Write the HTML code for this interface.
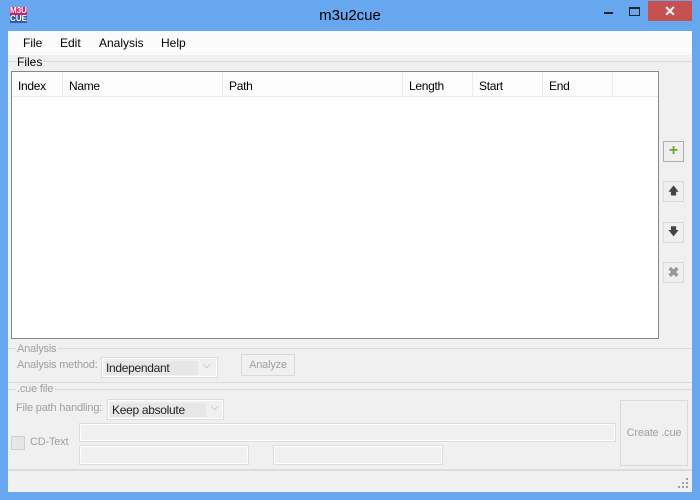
<!DOCTYPE html>
<html><head><style>
*{margin:0;padding:0;box-sizing:border-box}
body{width:700px;height:500px;background:#67a7f0;position:relative;overflow:hidden;font-family:"Liberation Sans",sans-serif;font-size:12px;color:#000}
.a{position:absolute}
.t{position:absolute;white-space:nowrap}
.g{color:#a0a0a0;font-size:11px;letter-spacing:-0.2px}
.hd{position:absolute;top:0;height:25px;border-right:1px solid #e3ecf8;padding:7px 0 0 6px;letter-spacing:-0.3px}
.btn{position:absolute;width:21px;height:21px;border:1px solid #dadada;background:#efefef}
.fld{position:absolute;border:1px solid #dcdcdc;background:#f0f0f0;box-shadow:inset 0 0 0 1px #fff}
</style></head><body>
<div class="a" style="left:10px;top:7px;width:17px;height:8px;background:#d8206a;color:#fff;font-size:8px;line-height:8px;font-weight:bold;text-align:center">M3U</div>
<div class="a" style="left:10px;top:15px;width:17px;height:8px;background:#3a5aa8;color:#fff;font-size:8px;line-height:8px;font-weight:bold;text-align:center">CUE</div>
<div class="t" style="left:0;width:700px;top:7px;text-align:center;font-size:15px;color:#000">m3u2cue</div>
<div class="a" style="left:604px;top:12px;width:9px;height:2px;background:#222"></div>
<div class="a" style="left:629px;top:7px;width:11px;height:9px;border:1px solid #222;border-top-width:2px"></div>
<div class="a" style="left:648px;top:1px;width:44px;height:20px;background:#c75050;color:#fff;text-align:center;font-size:14px;font-weight:bold;line-height:20px">✕</div>
<div class="a" style="left:8px;top:31px;width:684px;height:461px;background:#f0f0f0"></div>
<div class="a" style="left:8px;top:31px;width:684px;height:24px;background:#fbfbfb"></div>
<div class="t" style="left:23px;top:36px">File</div>
<div class="t" style="left:60px;top:36px">Edit</div>
<div class="t" style="left:99px;top:36px">Analysis</div>
<div class="t" style="left:161px;top:36px">Help</div>
<div class="a" style="left:8px;top:61px;width:684px;height:1px;background:#dcdcdc"></div>
<div class="t" style="left:16px;top:55px;background:#f0f0f0;padding:0 2px 0 1px">Files</div>
<div class="a" style="left:11px;top:71px;width:648px;height:268px;background:#fff;border:1px solid #828790">
 <div class="a" style="left:0;top:0;width:646px;height:25px;background:#fcfcfc;border-bottom:1px solid #e3ecf8">
  <div class="hd" style="left:0;width:51px">Index</div>
  <div class="hd" style="left:51px;width:160px">Name</div>
  <div class="hd" style="left:211px;width:180px">Path</div>
  <div class="hd" style="left:391px;width:70px">Length</div>
  <div class="hd" style="left:461px;width:70px">Start</div>
  <div class="hd" style="left:531px;width:70px">End</div>
 </div>
</div>
<div class="btn" style="left:663px;top:141px;border-color:#adadad;color:#6ca52a;font-weight:bold;font-size:16px;text-align:center;line-height:18px">+</div>
<div class="btn" style="left:663px;top:181px;text-align:center;color:#444;font-size:11px;line-height:19px">🡅</div>
<div class="btn" style="left:663px;top:222px;text-align:center;color:#444;font-size:11px;line-height:19px">🡇</div>
<div class="btn" style="left:663px;top:262px;text-align:center;color:#999;font-size:14px;font-weight:bold;line-height:19px">✖</div>
<div class="a" style="left:8px;top:348px;width:684px;height:1px;background:#dcdcdc"></div>
<div class="t g" style="left:16px;top:343px;background:#f0f0f0;padding:0 2px 0 1px">Analysis</div>
<div class="t g" style="left:17px;top:359px">Analysis method:</div>
<div class="fld" style="left:101px;top:357px;width:117px;height:21px"><span class="t" style="left:3px;top:3px;width:93px;height:14px;background:#e7e7e7;color:#222;padding-left:1px;letter-spacing:-0.3px">Independant</span><span class="t" style="left:101px;top:2px;font-size:10px;color:#a0a0a0">⌵</span></div>
<div class="a g" style="left:241px;top:354px;width:54px;height:22px;border:1px solid #dadada;text-align:center;line-height:20px">Analyze</div>
<div class="a" style="left:8px;top:382px;width:684px;height:1px;background:#dcdcdc"></div>
<div class="a" style="left:8px;top:389px;width:684px;height:1px;background:#dcdcdc"></div>
<div class="t g" style="left:16px;top:383px;background:#f0f0f0;padding:0 2px 0 1px">.cue file</div>
<div class="t g" style="left:16px;top:402px">File path handling:</div>
<div class="fld" style="left:107px;top:399px;width:117px;height:21px"><span class="t" style="left:2px;top:3px;width:96px;height:14px;background:#e7e7e7;color:#222;padding-left:2px;letter-spacing:-0.3px">Keep absolute</span><span class="t" style="left:103px;top:2px;font-size:10px;color:#a0a0a0">⌵</span></div>
<div class="a" style="left:11px;top:436px;width:14px;height:14px;border:1px solid #cfcfcf;background:#e6e6e6"></div>
<div class="t g" style="left:30px;top:436px">CD-Text</div>
<div class="fld" style="left:79px;top:423px;width:537px;height:19px"></div>
<div class="fld" style="left:79px;top:445px;width:170px;height:20px"></div>
<div class="fld" style="left:273px;top:445px;width:170px;height:20px"></div>
<div class="a g" style="left:620px;top:400px;width:68px;height:66px;border:1px solid #dadada;text-align:center;line-height:64px">Create .cue</div>
<div class="a" style="left:8px;top:469px;width:684px;height:2px;background:#dcdcdc"></div>
<svg class="a" style="left:678px;top:478px" width="12" height="12"><g fill="#a0a0a0"><rect x="8" y="0" width="2" height="2"/><rect x="4" y="4" width="2" height="2"/><rect x="8" y="4" width="2" height="2"/><rect x="0" y="8" width="2" height="2"/><rect x="4" y="8" width="2" height="2"/><rect x="8" y="8" width="2" height="2"/></g></svg>
</body></html>
